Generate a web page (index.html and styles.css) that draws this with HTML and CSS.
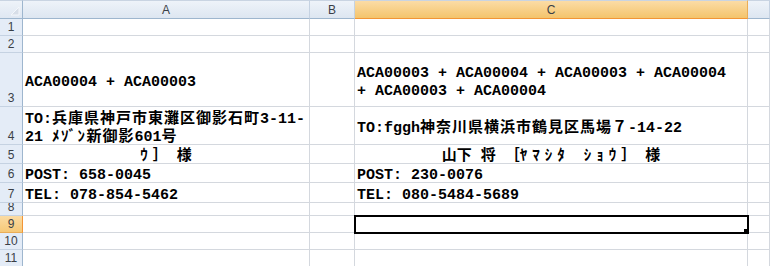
FILE: index.html
```html
<!DOCTYPE html>
<html lang="ja">
<head>
    <meta charset="UTF-8">
    <meta name="viewport" content="width=device-width, initial-scale=1.0">
    <title>Sheet1</title>
    <link rel="stylesheet" href="styles.css">
</head>
<body>
    <div class="sheet">
        <!-- 列見出し -->
        <div class="corner">
            <svg width="10" height="10" viewBox="0 0 10 10"><polygon points="9,1 9,9 1,9" fill="#d7dee8" stroke="#f4f7fb" stroke-width="1"/></svg>
        </div>
        <div class="col-head">A</div>
        <div class="col-head">B</div>
        <div class="col-head active">C</div>
        <div class="col-head"></div>

        <!-- 1 -->
        <div class="row-head">1</div>
        <div class="cell"></div>
        <div class="cell"></div>
        <div class="cell"></div>
        <div class="cell"></div>

        <!-- 2 -->
        <div class="row-head">2</div>
        <div class="cell"></div>
        <div class="cell"></div>
        <div class="cell"></div>
        <div class="cell"></div>

        <!-- 3 -->
        <div class="row-head">3</div>
        <div class="cell"><div class="val">ACA00004 + ACA00003</div></div>
        <div class="cell"></div>
        <div class="cell"><div class="val">ACA00003 + ACA00004 + ACA00003 + ACA00004<br>+ ACA00003 + ACA00004</div></div>
        <div class="cell"></div>

        <!-- 4 -->
        <div class="row-head">4</div>
        <div class="cell"><div class="val">TO:<span class="jp">兵庫県神戸市東灘区御影石町</span>3-11-<br>21 <span class="hk">ﾒｿﾞﾝ</span><span class="jp">新御影</span>601<span class="jp">号</span></div></div>
        <div class="cell"></div>
        <div class="cell"><div class="val">TO:fggh<span class="jp">神奈川県横浜市鶴見区馬場７</span>-14-22</div></div>
        <div class="cell"></div>

        <!-- 5 -->
        <div class="row-head">5</div>
        <div class="cell center"><div class="val"><span class="hk wide">ｳ</span>］ 様</div></div>
        <div class="cell"></div>
        <div class="cell center"><div class="val">山下 将 ［<span class="hk wide">ﾔﾏｼﾀ ｼｮｳ</span>］ 様</div></div>
        <div class="cell"></div>

        <!-- 6 -->
        <div class="row-head">6</div>
        <div class="cell"><div class="val">POST: 658-0045</div></div>
        <div class="cell"></div>
        <div class="cell"><div class="val">POST: 230-0076</div></div>
        <div class="cell"></div>

        <!-- 7 -->
        <div class="row-head">7</div>
        <div class="cell"><div class="val">TEL: 078-854-5462</div></div>
        <div class="cell"></div>
        <div class="cell"><div class="val">TEL: 080-5484-5689</div></div>
        <div class="cell"></div>

        <!-- 8 -->
        <div class="row-head">8</div>
        <div class="cell"></div>
        <div class="cell"></div>
        <div class="cell"></div>
        <div class="cell"></div>

        <!-- 9 -->
        <div class="row-head active">9</div>
        <div class="cell"></div>
        <div class="cell"></div>
        <div class="cell selected"></div>
        <div class="cell"></div>

        <!-- 10 -->
        <div class="row-head">10</div>
        <div class="cell"></div>
        <div class="cell"></div>
        <div class="cell"></div>
        <div class="cell"></div>

        <!-- 11 -->
        <div class="row-head">11</div>
        <div class="cell"></div>
        <div class="cell"></div>
        <div class="cell"></div>
        <div class="cell"></div>
    </div>
</body>
</html>
```

FILE: styles.css
```css
* {
    margin: 0;
    padding: 0;
    box-sizing: border-box;
}

body {
    background-color: #fff;
    overflow: hidden;
}

.sheet {
    width: 770px;
    height: 266px;
    display: grid;
    grid-template-columns: 23px 287px 45px 393px 1fr;
    grid-template-rows: 19px 17px 17px 54px 38px 19px 19px 20px 13px 17px 17px 17px;
    overflow: hidden;
}

/* 見出し */
.corner,
.col-head,
.row-head {
    font-family: "Liberation Sans", Arial, sans-serif;
    font-size: 12px;
    color: #3a3f47;
    overflow: hidden;
}

.corner {
    background: linear-gradient(#eef3f9, #dfe7f2);
    border-top: 1px solid #c9d4e2;
    border-right: 1px solid #9eb6ce;
    border-bottom: 1px solid #9eb6ce;
    display: flex;
    justify-content: flex-end;
    align-items: flex-end;
    padding: 0 2px 2px 0;
}

.col-head {
    background: linear-gradient(#eef3f9, #dde6f1);
    border-top: 1px solid #c9d4e2;
    border-right: 1px solid #c5d2e2;
    border-bottom: 1px solid #9eb6ce;
    display: flex;
    justify-content: center;
    align-items: center;
}

.col-head.active {
    background: linear-gradient(#fbdca6, #f4c46c);
    border-right-color: #eaad57;
    border-bottom-color: #f29536;
}

.row-head {
    background-color: #e4ecf7;
    border-right: 1px solid #9eb6ce;
    border-bottom: 1px solid #c5d2e2;
    display: flex;
    justify-content: center;
    align-items: flex-end;
    line-height: 14px;
    padding-bottom: 1px;
}

.row-head.active {
    background: linear-gradient(#fbdba3, #f6c978);
    border-right-color: #f29536;
    border-bottom-color: #eaad57;
}

/* セル */
.cell {
    border-right: 1px solid #d4d8de;
    border-bottom: 1px solid #d4d8de;
    padding: 6px 2px 0;
    display: flex;
    align-items: center;
    overflow: hidden;
    white-space: nowrap;
    font-family: "Liberation Mono", "Noto Sans CJK JP", monospace;
    font-size: 15px;
    font-weight: bold;
    color: #000;
}

.cell.center {
    justify-content: center;
}

.val {
    line-height: 18px;
    flex-shrink: 0;
}

.jp {
    letter-spacing: 1px;
}

.hk {
    letter-spacing: 1.5px;
}

.hk.wide {
    letter-spacing: 5px;
}

.cell.selected {
    position: relative;
    overflow: visible;
    outline: 2px solid #000;
    outline-offset: -1px;
    z-index: 1;
}

.cell.selected::after {
    content: "";
    position: absolute;
    right: -2px;
    bottom: -2px;
    width: 5px;
    height: 5px;
    background-color: #000;
}
```
